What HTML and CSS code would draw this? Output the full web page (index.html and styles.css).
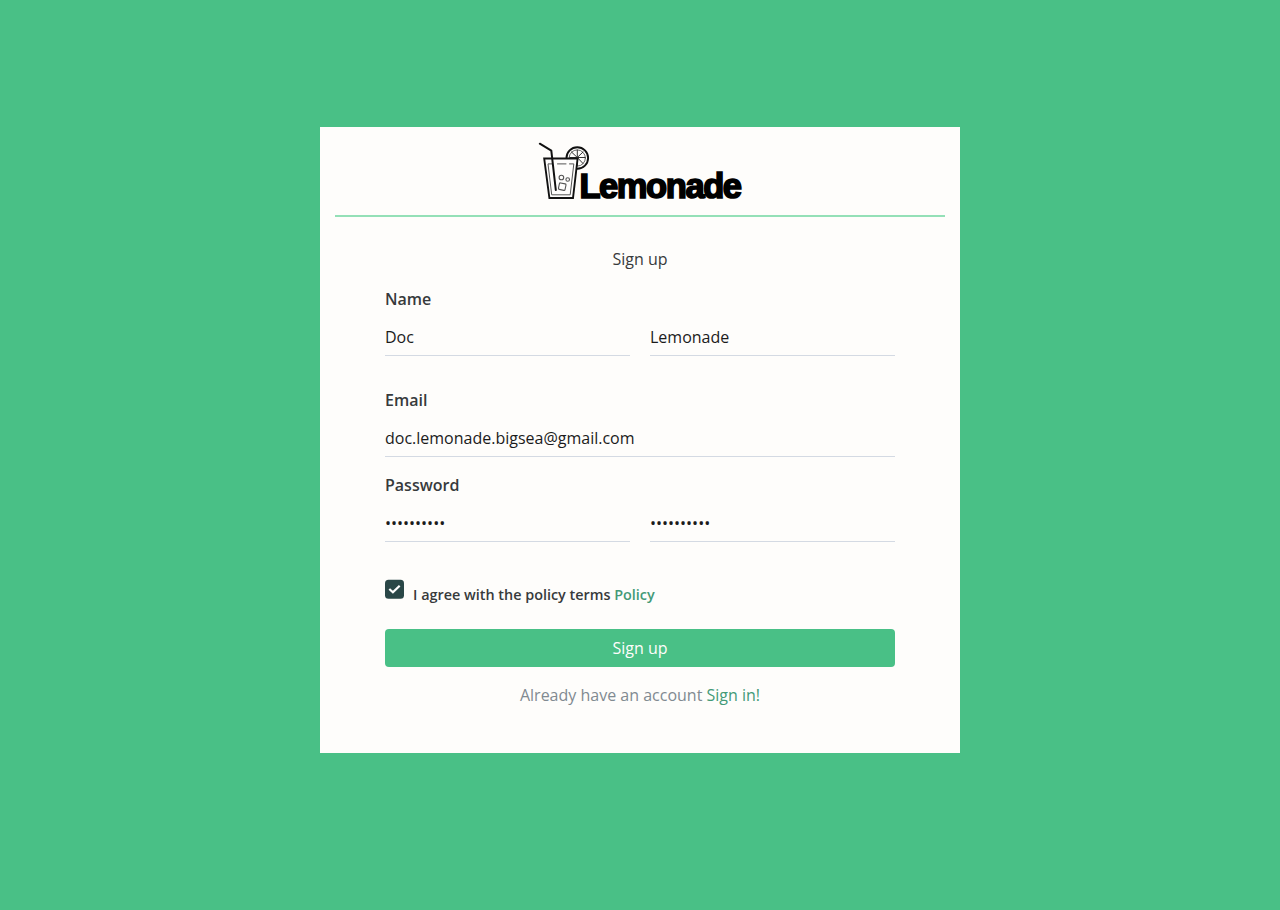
FILE: index.html
```html
<!DOCTYPE html>
<html lang="en">
<head>
<meta charset="utf-8">
<title>Lemonade - Sign up</title>
<link rel="stylesheet" href="styles.css">
</head>
<body>
<main class="card">
  <header class="brand">
    <svg class="logo" viewBox="539 142 204 58" role="img" aria-label="Lemonade">
      <g fill="none" stroke="#111" stroke-linejoin="round" stroke-linecap="round">
        <circle cx="577.3" cy="158" r="10.8" stroke-width="1.9"/>
        <circle cx="577.3" cy="158" r="8.1" stroke="#555" stroke-width=".9"/>
        <path stroke="#333" stroke-width="1" d="M577.3 157.5V150M577.3 157.5L571.5 152M577.3 157.5L583 152M577.3 157.5H585M577.3 157.5L583 163.5M577.3 157.5V165.5M577.3 157.5H570"/>
        <path fill="#fefdfc" stroke-width="1.9" stroke-linejoin="miter" d="M544.2 158.5H577.6L573 198H549.4Z"/>
        <path stroke="#555" stroke-width="1" d="M552 163.9H548L551.7 194.8H570.2L573.8 163.9H569.5M557.5 163.9H566"/>
        <path stroke-width="2" d="M539.8 143.7L551.3 150.7L555.8 190"/>
        <g stroke="#555" stroke-width="1.1"><circle cx="561.4" cy="177.5" r="2.3"/><circle cx="567.7" cy="179.5" r="1.8"/><rect x="558.9" y="183.3" width="6.7" height="6.6" rx="1" transform="rotate(12 562 186.5)"/></g>
      </g>
      <text class="wordmark" x="579.4" y="198.1" textLength="162.6" lengthAdjust="spacing">Lemonade</text>
    </svg>
  </header>
  <form class="form">
    <h1 class="title">Sign up</h1>
    <label class="label" for="first">Name</label>
    <div class="row row-name">
      <input class="field" id="first" type="text" value="Doc">
      <input class="field" type="text" value="Lemonade" aria-label="Last name">
    </div>
    <label class="label" for="email">Email</label>
    <div class="row row-email">
      <input class="field" id="email" type="text" value="doc.lemonade.bigsea@gmail.com">
    </div>
    <label class="label" for="pass">Password</label>
    <div class="row row-pass">
      <input class="field" id="pass" type="password" value="lemonade10">
      <input class="field" type="password" value="lemonade10" aria-label="Confirm password">
    </div>
    <div class="agree">
      <svg class="check" viewBox="0 0 19 19"><rect y="-.3" width="19" height="19" rx="3.5" fill="#2a4747"/><path d="M4.3 9L7.9 12.3L14.7 5.7" fill="none" stroke="#fff" stroke-width="2.2"/></svg>
      <span class="terms">I agree with the policy terms <a class="link">Policy</a></span>
    </div>
    <button class="submit" type="button">Sign up</button>
    <p class="signin">Already have an account <a class="link">Sign in!</a></p>
  </form>
</main>
</body>
</html>
```
FILE: styles.css
```css
* { box-sizing: border-box; }
body {
  margin: 0;
  padding-top: 127px;
  min-height: 910px;
  background: #49c086;
  color: #373a3c;
  font: 400 16px/24px "Open Sans", sans-serif;
}
.card {
  width: 640px;
  height: 626px;
  margin: 0 auto;
  padding: 0 15px;
  background: #fefdfb;
}
.brand {
  display: flex;
  justify-content: center;
  height: 90px;
  padding-top: 15px;
  border-bottom: 2px solid #94e0b7;
}
.logo { width: 204px; height: 58px; overflow: visible; margin-left: 2px; }
.wordmark {
  font: bold 34.5px "Liberation Sans", Arial, sans-serif;
  fill: #000;
  stroke: #000;
  stroke-width: 1.7px;
}
.form { padding: 30px 50px 0; }
.title { margin: 0 0 16px; font-size: 16px; font-weight: 400; text-align: center; }
.label { display: block; font-weight: 600; }
.row { display: flex; gap: 20px; padding-top: 7px; }
.row-name { margin-bottom: 32px; }
.row-email { margin-bottom: 16px; }
.field {
  flex: 1;
  min-width: 0;
  height: 38px;
  padding: 0;
  border: 0;
  border-bottom: 1px solid #d4dae3;
  background: transparent;
  color: #1b1b1b;
  font: inherit;
  outline: none;
}
.agree { display: flex; gap: 9px; margin-top: 38px; height: 49px; }
.check { width: 19px; height: 19px; overflow: visible; }
.terms { padding-top: 3px; font-size: 14.4px; font-weight: 600; }
.link { color: #439a77; }
.submit {
  display: block;
  width: 100%;
  height: 38px;
  padding: 0;
  border: 0;
  border-radius: 4px;
  background: #49c086;
  color: #fefdfb;
  font: inherit;
}
.signin { margin: 16px 0 0; text-align: center; color: #818a91; }
```
